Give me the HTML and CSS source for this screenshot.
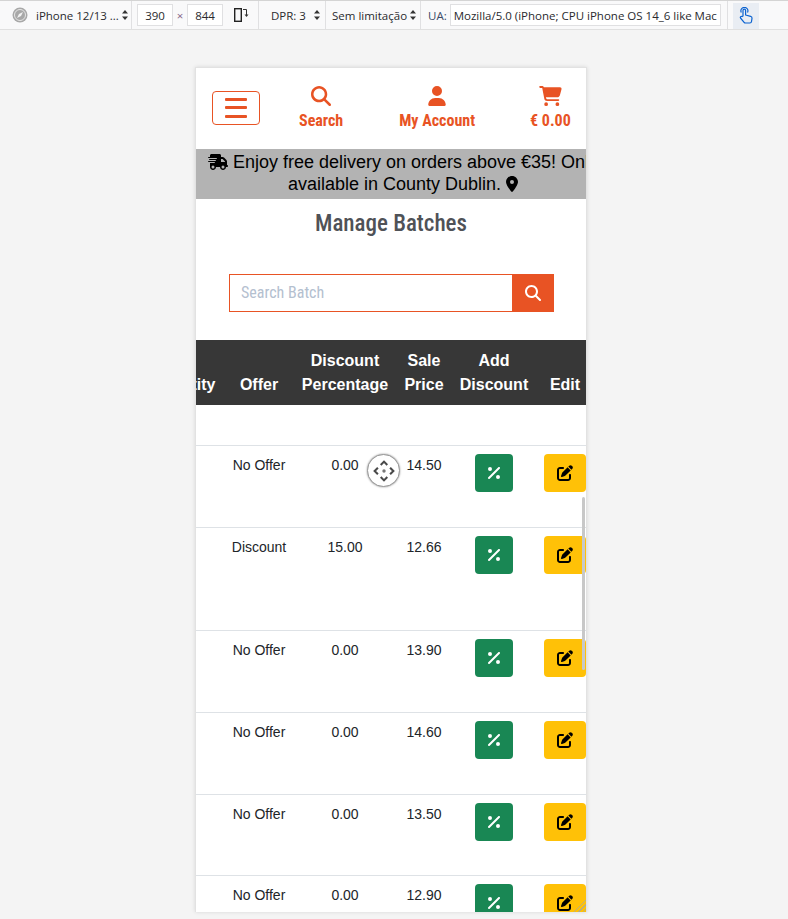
FILE: index.html
```html
<!DOCTYPE html>
<html lang="en">
<head>
  <meta charset="UTF-8">
  <title>Manage Batches</title>
  <link rel="stylesheet" href="styles.css">
</head>
<body>
  <svg class="defs" width="0" height="0">
    <symbol id="i-search" viewBox="0 0 512 512"><path d="M416 208c0 45.9-14.9 88.3-40 122.7L502.6 457.4c12.5 12.5 12.5 32.8 0 45.3s-32.8 12.5-45.3 0L330.7 376c-34.4 25.2-76.8 40-122.7 40C93.1 416 0 322.9 0 208S93.1 0 208 0S416 93.1 416 208zM208 352a144 144 0 1 0 0-288 144 144 0 1 0 0 288z"/></symbol>
    <symbol id="i-percent" viewBox="0 0 384 512"><path d="M374.6 118.6c12.5-12.5 12.5-32.8 0-45.3s-32.8-12.5-45.3 0l-320 320c-12.5 12.5-12.5 32.8 0 45.3s32.8 12.5 45.3 0l320-320zM128 128A64 64 0 1 0 0 128a64 64 0 1 0 128 0zM384 384a64 64 0 1 0 -128 0 64 64 0 1 0 128 0z"/></symbol>
    <symbol id="i-edit" viewBox="0 0 512 512"><path d="M471.6 21.7c-21.9-21.9-57.3-21.9-79.2 0L362.3 51.7l97.9 97.9 30.1-30.1c21.9-21.9 21.9-57.3 0-79.2L471.6 21.7zm-299.2 220c-6.1 6.1-10.8 13.6-13.5 21.9l-29.6 88.8c-2.9 8.6-.6 18.1 5.8 24.6s15.9 8.7 24.6 5.8l88.8-29.6c8.2-2.7 15.7-7.4 21.9-13.5L437.7 172.3 339.7 74.3 172.4 241.7zM96 64C43 64 0 107 0 160V416c0 53 43 96 96 96H352c53 0 96-43 96-96V320c0-17.7-14.3-32-32-32s-32 14.3-32 32v96c0 17.7-14.3 32-32 32H96c-17.7 0-32-14.3-32-32V160c0-17.7 14.3-32 32-32h96c17.7 0 32-14.3 32-32s-14.3-32-32-32H96z"/></symbol>
    <symbol id="i-updown" viewBox="0 0 8 12"><path d="M4 1l3 3.5H1zM4 11L1 7.500h6z"/></symbol>
  </svg>

  <div class="devbar">
    <div class="seg seg-device">
      <span class="globe"><svg viewBox="0 0 16 16" width="16" height="16"><circle cx="8" cy="8" r="7.500" fill="#a8a8a8"/><circle cx="8" cy="8" r="5.500" fill="none" stroke="#e6e6e6"/><path d="M11 5L7 7l-2 4 4-2z" fill="#f2f2f2"/></svg></span>
      <span class="seg-text">iPhone 12/13 ...</span>
      <svg class="updown"><use href="#i-updown"/></svg>
    </div>
    <div class="seg seg-size">
      <span class="size-box">390</span>
      <span class="times">×</span>
      <span class="size-box">844</span>
      <svg class="rotate" viewBox="0 0 16 16" width="16" height="16"><rect x="1.700" y="1.700" width="6.600" height="12.600" fill="none" stroke="#222" stroke-width="1.400"/><path d="M10 2.500h3.500v5.500" fill="none" stroke="#333"/><path d="M11.500 7.500h4l-2 2.500z" fill="#333"/></svg>
    </div>
    <div class="seg seg-dpr">
      <span class="seg-text">DPR: 3</span>
      <svg class="updown"><use href="#i-updown"/></svg>
    </div>
    <div class="seg seg-net">
      <span class="seg-text">Sem limitação</span>
      <svg class="updown"><use href="#i-updown"/></svg>
    </div>
    <div class="seg seg-ua">
      <span class="seg-text ua-label">UA:</span>
      <span class="ua-box">Mozilla/5.0 (iPhone; CPU iPhone OS 14_6 like Mac</span>
    </div>
    <div class="touch-btn">
      <svg viewBox="0 0 16 18" width="16" height="18" fill="none" stroke="#0a62d0" stroke-width="1.200" stroke-linejoin="round"><path d="M5 9V3.500a1.300 1.300 0 0 1 2.600 0V8l5 1.300c1 .3 1.500 1 1.400 2l-.5 3.200c-.1 1-.8 1.500-1.700 1.500H7.500c-.6 0-1-.2-1.400-.7L2.500 11c-.7-1 .6-2.300 1.600-1.400z"/><path d="M3.300 5.500a3.500 3.500 0 1 1 6.200 0"/></svg>
    </div>
  </div>

  <div class="phone">
    <header class="topnav">
      <button class="burger"><span></span><span></span><span></span></button>
      <a class="nav-item nav-search">
        <svg width="20" height="20"><use href="#i-search"/></svg>
        <span>Search</span>
      </a>
      <a class="nav-item nav-account">
        <svg viewBox="0 0 448 512" width="18" height="20"><path d="M224 256A128 128 0 1 0 224 0a128 128 0 1 0 0 256zm-45.700 48C79.800 304 0 383.800 0 482.300C0 498.700 13.300 512 29.700 512H418.300c16.400 0 29.700-13.300 29.700-29.700C448 383.800 368.200 304 269.700 304H178.300z"/></svg>
        <span>My Account</span>
      </a>
      <a class="nav-item nav-cart">
        <svg viewBox="0 0 576 512" width="23" height="20"><path d="M0 24C0 10.700 10.700 0 24 0H69.500c22 0 41.500 12.800 50.600 32h411c26.300 0 45.500 25 38.600 50.400l-41 152.300c-8.500 31.400-37 53.300-69.500 53.300H170.700l5.400 28.500c2.200 11.300 12.100 19.500 23.600 19.500H488c13.300 0 24 10.700 24 24s-10.700 24-24 24H199.700c-34.600 0-64.300-24.600-70.700-58.500L77.400 54.500c-.7-3.800-4-6.500-7.900-6.500H24C10.700 48 0 37.300 0 24zM128 464a48 48 0 1 1 96 0 48 48 0 1 1 -96 0zm336-48a48 48 0 1 1 0 96 48 48 0 1 1 0-96z"/></svg>
        <span>€ 0.00</span>
      </a>
    </header>

    <div class="promo">
      <p>
        <svg viewBox="0 0 640 512" width="20" height="16"><path d="M112 0C85.500 0 64 21.500 64 48V96H16c-8.800 0-16 7.200-16 16s7.200 16 16 16H272c8.800 0 16 7.200 16 16s-7.200 16-16 16H48c-8.800 0-16 7.200-16 16s7.200 16 16 16H240c8.800 0 16 7.200 16 16s-7.200 16-16 16H16c-8.800 0-16 7.200-16 16s7.200 16 16 16H208c8.800 0 16 7.200 16 16s-7.200 16-16 16H64V416c0 53 43 96 96 96s96-43 96-96H384c0 53 43 96 96 96s96-43 96-96h32c17.700 0 32-14.300 32-32s-14.300-32-32-32V237.300c0-17-6.700-33.300-18.700-45.300L512 114.700c-12-12-28.300-18.700-45.300-18.700H416V48c0-26.500-21.500-48-48-48H112zM544 237.300V256H416V160h50.700L544 237.300zM160 368a48 48 0 1 1 0 96 48 48 0 1 1 0-96zm272 48a48 48 0 1 1 96 0 48 48 0 1 1 -96 0z"/></svg>
        Enjoy free delivery on orders above €35! Only available in County Dublin.
        <svg viewBox="0 0 384 512" width="12" height="16"><path d="M215.700 499.200C267 435 384 279.400 384 192C384 86 298 0 192 0S0 86 0 192c0 87.400 117 243 168.300 307.200c12.300 15.300 35.100 15.300 47.400 0zM192 256a64 64 0 1 1 0-128 64 64 0 1 1 0 128z"/></svg>
      </p>
    </div>

    <h1 class="page-title">Manage Batches</h1>

    <form class="batch-search">
      <input type="text" placeholder="Search Batch">
      <button type="button"><svg width="16" height="16"><use href="#i-search"/></svg></button>
    </form>

    <div class="table-wrap">
      <table class="batches">
        <colgroup>
          <col class="c-qty"><col class="c-offer"><col class="c-disc"><col class="c-price"><col class="c-add"><col class="c-edit">
        </colgroup>
        <thead>
          <tr>
            <th>Quantity</th>
            <th>Offer</th>
            <th>Discount Percentage</th>
            <th>Sale<br>Price</th>
            <th>Add<br>Discount</th>
            <th>Edit</th>
          </tr>
        </thead>
        <tbody>
          <tr class="row-empty"><td colspan="6"></td></tr>
          <tr class="row">
            <td></td><td>No Offer</td><td>0.00</td><td>14.50</td>
            <td><a class="act act-add"><svg width="12" height="16"><use href="#i-percent"/></svg></a></td>
            <td><a class="act act-edit"><svg width="16" height="16"><use href="#i-edit"/></svg></a></td>
          </tr>
          <tr class="row row-tall">
            <td></td><td>Discount</td><td>15.00</td><td>12.66</td>
            <td><a class="act act-add"><svg width="12" height="16"><use href="#i-percent"/></svg></a></td>
            <td><a class="act act-edit"><svg width="16" height="16"><use href="#i-edit"/></svg></a></td>
          </tr>
          <tr class="row">
            <td></td><td>No Offer</td><td>0.00</td><td>13.90</td>
            <td><a class="act act-add"><svg width="12" height="16"><use href="#i-percent"/></svg></a></td>
            <td><a class="act act-edit"><svg width="16" height="16"><use href="#i-edit"/></svg></a></td>
          </tr>
          <tr class="row">
            <td></td><td>No Offer</td><td>0.00</td><td>14.60</td>
            <td><a class="act act-add"><svg width="12" height="16"><use href="#i-percent"/></svg></a></td>
            <td><a class="act act-edit"><svg width="16" height="16"><use href="#i-edit"/></svg></a></td>
          </tr>
          <tr class="row row-short">
            <td></td><td>No Offer</td><td>0.00</td><td>13.50</td>
            <td><a class="act act-add"><svg width="12" height="16"><use href="#i-percent"/></svg></a></td>
            <td><a class="act act-edit"><svg width="16" height="16"><use href="#i-edit"/></svg></a></td>
          </tr>
          <tr class="row">
            <td></td><td>No Offer</td><td>0.00</td><td>12.90</td>
            <td><a class="act act-add"><svg width="12" height="16"><use href="#i-percent"/></svg></a></td>
            <td><a class="act act-edit"><svg width="16" height="16"><use href="#i-edit"/></svg></a></td>
          </tr>
        </tbody>
      </table>
    </div>

    <div class="scroll-thumb"></div>
    <div class="touch-point">
      <svg viewBox="0 0 32 32" width="30" height="30" fill="none" stroke="#4a4a4a" stroke-width="2.200"><path d="M12.500 9.500L16 6l3.500 3.500M12.500 22.500L16 26l3.500-3.500M9.500 12.500L6 16l3.500 3.500M22.500 12.500L26 16l-3.500 3.500"/><circle cx="16" cy="16" r="1.800" fill="#777" stroke="none"/></svg>
    </div>
    <div class="resize-grip"></div>
  </div>
</body>
</html>
```

FILE: styles.css
```css
html, body {
  margin: 0;
  height: 100%;
}

body {
  background: #f4f4f4;
  font-family: "Liberation Sans", Arial, sans-serif;
  overflow: hidden;
}

.defs {
  position: absolute;
}

/* responsive design toolbar */
.devbar {
  display: flex;
  height: 30px;
  background: #f9f9fa;
  border-top: 1px solid #d4d4d4;
  border-bottom: 1px solid #e0e0e0;
  box-sizing: border-box;
  font-family: "Open Sans", sans-serif;
  font-size: 11.500px;
  color: #2a2a2e;
}

.seg {
  display: flex;
  align-items: center;
  border-right: 1px solid #e0e0e2;
  box-sizing: border-box;
  flex: none;
}

.seg-text {
  white-space: nowrap;
}

.updown {
  width: 8px;
  height: 12px;
  fill: #333;
  flex: none;
}

.seg-device {
  width: 132px;
  padding-left: 12px;
}

.globe {
  display: flex;
  margin-right: 8px;
}

.seg-device .updown {
  margin-left: 2px;
}

.seg-size {
  width: 127px;
  padding-left: 5px;
}

.size-box {
  width: 36px;
  height: 22px;
  line-height: 22px;
  text-align: center;
  background: #fff;
  border: 1px solid #e0e0e2;
  box-sizing: border-box;
}

.times {
  width: 14px;
  text-align: center;
  color: #8a6a8a;
}

.rotate {
  margin-left: 10px;
}

.seg-dpr {
  width: 67px;
  padding-left: 12px;
}

.seg-dpr .updown {
  margin-left: 7px;
}

.seg-net {
  width: 95px;
  padding-left: 6px;
}

.seg-net .updown {
  margin-left: 2px;
}

.seg-ua {
  width: 307px;
  padding-left: 7px;
}

.ua-label {
  color: #3b4a66;
}

.ua-box {
  width: 271px;
  height: 22px;
  line-height: 21px;
  margin-left: 3px;
  padding-left: 3px;
  background: #fff;
  border: 1px solid #e0e0e2;
  box-sizing: border-box;
  overflow: hidden;
  white-space: nowrap;
}

.touch-btn {
  display: flex;
  align-items: center;
  justify-content: center;
  width: 26px;
  margin: 2px 0 0 5px;
  background: #e9edf3;
}

/* the emulated phone */
.phone {
  position: relative;
  width: 392px;
  height: 845px;
  margin: 37px 0 0 195px;
  background: #fff;
  box-sizing: border-box;
  border: 1px solid #e2e2e2;
  border-bottom: 0;
  box-shadow: 0 0 4px rgba(0, 0, 0, 0.12);
  overflow: hidden;
}

.topnav {
  display: flex;
  align-items: center;
  gap: 55px;
  height: 81px;
  padding-left: 16px;
  color: #e85324;
}

.burger {
  display: flex;
  flex-direction: column;
  justify-content: center;
  gap: 5.500px;
  width: 48px;
  height: 34px;
  margin: 0 -16px 2px 0;
  padding: 0;
  align-items: center;
  background: #fff;
  border: 1px solid #e85324;
  border-radius: 4px;
}

.burger span {
  display: block;
  width: 22px;
  height: 3px;
  background: #e85324;
  border-radius: 1px;
}

.nav-item {
  display: flex;
  flex-direction: column;
  align-items: center;
  gap: 5px;
  padding-bottom: 1px;
  font-family: "Roboto Condensed", "Liberation Sans Narrow", Roboto, sans-serif;
  font-stretch: condensed;
  font-size: 16px;
  font-weight: 700;
  white-space: nowrap;
}

.nav-account {
  margin-left: 1px;
}

.nav-item svg {
  fill: #e85324;
  display: block;
}

.promo {
  width: 414px;
  height: 50px;
  padding: 2px 0;
  box-sizing: border-box;
  background: #b3b3b3;
  color: #000;
  font-size: 18px;
  line-height: 22px;
  text-align: center;
}

.promo p {
  margin: 0;
}

.promo svg {
  vertical-align: -2px;
}

.page-title {
  margin: 0;
  height: 50px;
  line-height: 50px;
  text-align: center;
  font-family: "Roboto Condensed", "Liberation Sans Narrow", Roboto, sans-serif;
  font-stretch: condensed;
  font-size: 23px;
  font-weight: 500;
  color: #4f5257;
}

.batch-search {
  display: flex;
  width: 325px;
  height: 38px;
  margin: 25px 0 28px 33px;
}

.batch-search input {
  flex: 1;
  min-width: 0;
  padding: 0 11px 2px;
  border: 1px solid #e85324;
  border-right: 0;
  border-radius: 0;
  outline: none;
  font-family: "Roboto Condensed", "Liberation Sans Narrow", Roboto, sans-serif;
  font-stretch: condensed;
  font-size: 16px;
}

.batch-search input::placeholder {
  color: #b4c0cf;
}

.batch-search button {
  width: 42px;
  padding: 0;
  border: 0;
  background: #e85324;
  fill: #fff;
  display: flex;
  align-items: center;
  justify-content: center;
}

.table-wrap {
  overflow: hidden;
}

.batches {
  table-layout: fixed;
  width: 450px;
  margin-left: -50px;
  border-collapse: collapse;
  font-size: 14px;
  line-height: 23px;
  color: #212529;
}

.c-qty { width: 76px; }
.c-offer { width: 74px; }
.c-disc { width: 98px; }
.c-price { width: 60px; }
.c-add { width: 80px; }
.c-edit { width: 62px; }

.batches th {
  height: 65px;
  padding: 0 0 8px;
  box-sizing: border-box;
  background: #373737;
  color: #fff;
  font-size: 16px;
  line-height: 24px;
  vertical-align: bottom;
  text-align: center;
}

.batches th:first-child {
  padding-right: 2px;
}

.batches td {
  padding: 8px 0 0;
  text-align: center;
  vertical-align: top;
}

.batches tbody tr {
  border-bottom: 1px solid #dee2e6;
}

.row-empty td {
  height: 40px;
  padding: 0;
  box-sizing: border-box;
}

.row td {
  height: 82px;
  box-sizing: border-box;
}

.row-tall td {
  height: 103px;
}

.row-short td {
  height: 81px;
}

.act {
  display: inline-flex;
  align-items: center;
  justify-content: center;
  width: 38px;
  height: 38px;
  border-radius: 4px;
  vertical-align: top;
}

.act-add {
  background: #198754;
  fill: #fff;
}

.act-edit {
  width: 42px;
  background: #ffc107;
  fill: #000;
}

/* overlays drawn by the browser on top of the page */
.scroll-thumb {
  position: absolute;
  right: 1px;
  top: 429px;
  width: 3px;
  height: 173px;
  background: #c8c8c8;
  border-radius: 2px;
}

.touch-point {
  position: absolute;
  left: 171px;
  top: 386px;
  width: 33px;
  height: 33px;
  background: #fff;
  border: 1px solid #999;
  box-shadow: 0 0 2px rgba(0, 0, 0, 0.45);
  border-radius: 50%;
  box-sizing: border-box;
  display: flex;
  align-items: center;
  justify-content: center;
}

.resize-grip {
  position: absolute;
  right: 0;
  bottom: 0;
  width: 14px;
  height: 14px;
  background: repeating-linear-gradient(135deg, transparent 0 2px, rgba(170, 170, 150, 0.8) 2px 3px);
  clip-path: polygon(100% 0, 100% 100%, 0 100%);
}
```
